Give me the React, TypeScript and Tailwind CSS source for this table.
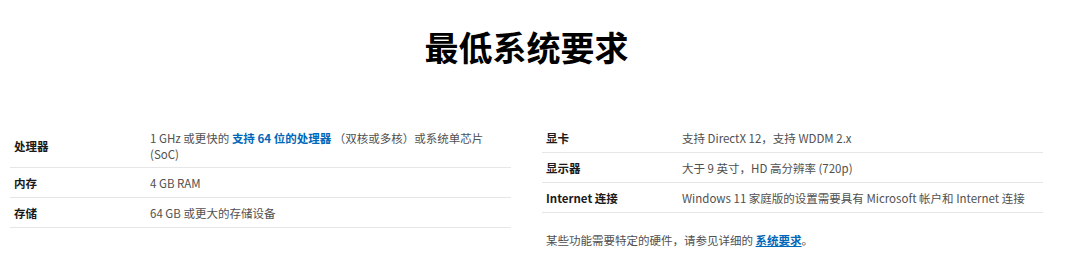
const font = { fontFamily: '"Segoe UI", "Noto Sans CJK SC", sans-serif' };

type Row = { label: string; value: React.ReactNode; tight?: boolean };

const left: Row[] = [
  {
    label: '处理器',
    tight: true,
    value: (
      <>
        1 GHz 或更快的 <a className="font-bold text-[#0067b8]">支持 64 位的处理器</a> （双核或多核）或系统单芯片
        <br />
        (SoC)
      </>
    ),
  },
  { label: '内存', value: '4 GB RAM' },
  { label: '存储', value: '64 GB 或更大的存储设备' },
];

const right: Row[] = [
  { label: '显卡', value: '支持 DirectX 12，支持 WDDM 2.x' },
  { label: '显示器', value: '大于 9 英寸，HD 高分辨率 (720p)' },
  { label: 'Internet 连接', value: 'Windows 11 家庭版的设置需要具有 Microsoft 帐户和 Internet 连接' },
];

function SpecTable({ rows }: { rows: Row[] }) {
  return (
    <div className="flex flex-col">
      {rows.map((r) => (
        <div
          key={r.label}
          className={
            r.tight
              ? 'grid grid-cols-[140px_1fr] items-center border-b border-[#e6e6e6] pt-[7px] pb-[5px]'
              : 'grid grid-cols-[140px_1fr] items-center border-b border-[#e6e6e6] pt-[7px] pb-[6px]'
          }
        >
          <div className="pl-[4px] text-[11.5px] leading-[16px] font-bold text-[#1a1a1a]">{r.label}</div>
          <div className="whitespace-nowrap text-[11.5px] leading-[16px] text-[#505050]">{r.value}</div>
        </div>
      ))}
    </div>
  );
}

export default function App() {
  return (
    <div className="bg-white w-[1080px] h-[259px] overflow-hidden" style={font}>
      <div className="ml-[10px] w-[1033px]">
        <h1 className="pt-[27px] text-center text-[34px] leading-[40px] font-bold text-black">最低系统要求</h1>
        <div className="mt-[56px] grid grid-cols-2 gap-[31px]">
          <SpecTable rows={left} />
          <div>
            <SpecTable rows={right} />
            <p className="mt-[19px] pl-[4px] text-[11.5px] leading-[16px] text-[#505050]">
              某些功能需要特定的硬件，请参见详细的 <a className="font-bold text-[#0067b8] underline">系统要求</a>。
            </p>
          </div>
        </div>
      </div>
    </div>
  );
}
